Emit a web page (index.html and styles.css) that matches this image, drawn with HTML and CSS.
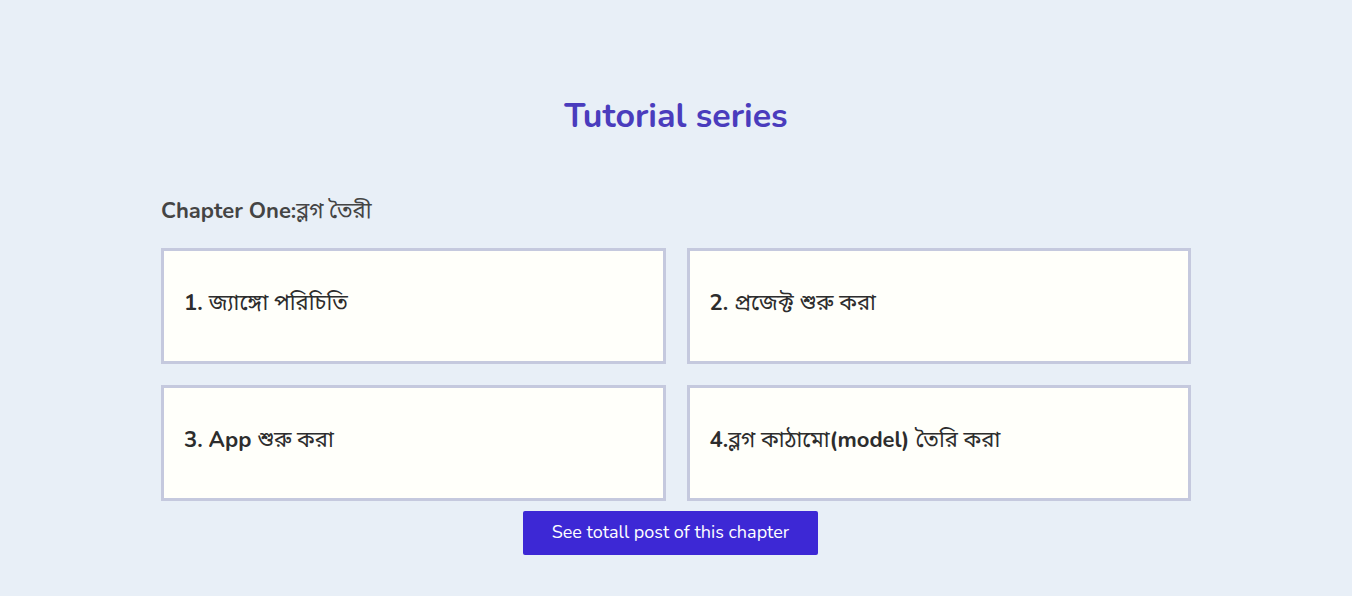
FILE: index.html
```html
<!DOCTYPE html>
<html lang="bn">
<head>
<meta charset="utf-8">
<title>Tutorial series</title>
<link rel="stylesheet" href="styles.css">
</head>
<body>
<main class="page">
  <h1 class="title">Tutorial series</h1>
  <section class="chapter">
    <h3 class="chapter-title">Chapter One:<span class="bn">ব্লগ তৈরী</span></h3>
    <div class="grid">
      <a class="card" href="#"><h4 class="card-title">1. <span class="bn">জ্যাঙ্গো পরিচিতি</span></h4></a>
      <a class="card" href="#"><h4 class="card-title">2. <span class="bn">প্রজেক্ট শুরু করা</span></h4></a>
      <a class="card" href="#"><h4 class="card-title">3. App <span class="bn">শুরু করা</span></h4></a>
      <a class="card" href="#"><h4 class="card-title">4.<span class="bn">ব্লগ কাঠামো</span>(model) <span class="bn">তৈরি করা</span></h4></a>
    </div>
    <div class="actions">
      <a class="btn" href="#">See totall post of this chapter</a>
    </div>
  </section>
</main>
</body>
</html>
```

FILE: styles.css
```css
* { box-sizing: border-box; }
html, body {
  margin: 0;
  padding: 0;
  background: #e8eff7;
}
body {
  font-family: "Nunito", "Open Sans", "Noto Sans", "Noto Sans Bengali", "Lohit Bengali", sans-serif;
  color: #333;
}
.page {
  width: 1030px;
  margin: 0 auto;
  padding-top: 94px;
}
.title {
  margin: 0;
  text-align: center;
  font-size: 34px;
  font-weight: 700;
  color: #4a3cbd;
  line-height: 44px;
}
.chapter {
  margin-top: 58px;
}
.chapter-title {
  margin: 0 0 22px 0;
  font-size: 22px;
  font-weight: 700;
  color: #444;
  line-height: 30px;
}
.bn {
  font-weight: 400;
}
.grid {
  display: grid;
  grid-template-columns: 1fr 1fr;
  gap: 21px;
}
.card {
  display: flex;
  align-items: center;
  height: 116px;
  padding: 0 20px 6px;
  background: #fffffa;
  border: 3px solid #c5c9de;
  text-decoration: none;
  color: #2d2d2d;
}
.card-title {
  margin: 0;
  font-size: 22px;
  font-weight: 700;
}
.actions {
  display: flex;
  justify-content: center;
  margin-top: 10px;
  padding-right: 11px;
}
.btn {
  display: inline-block;
  width: 295px;
  height: 44px;
  line-height: 43px;
  text-align: center;
  background: #3d28d5;
  color: #fff;
  text-decoration: none;
  font-size: 18px;
  border-radius: 2px;
}
```
